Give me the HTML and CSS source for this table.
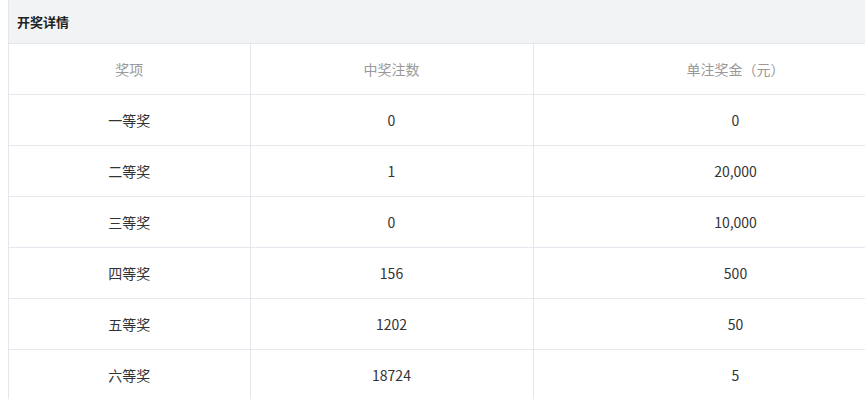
FILE: index.html
```html
<!DOCTYPE html>
<html lang="zh">
<head>
<meta charset="utf-8">
<link rel="stylesheet" href="styles.css">
</head>
<body>
<div class="panel">
  <div class="panel-title">开奖详情</div>
  <table class="detail">
    <colgroup>
      <col class="c1"><col class="c2"><col class="c3">
    </colgroup>
    <thead>
      <tr><th>奖项</th><th>中奖注数</th><th>单注奖金（元）</th></tr>
    </thead>
    <tbody>
      <tr><td>一等奖</td><td>0</td><td>0</td></tr>
      <tr><td>二等奖</td><td>1</td><td>20,000</td></tr>
      <tr><td>三等奖</td><td>0</td><td>10,000</td></tr>
      <tr><td>四等奖</td><td>156</td><td>500</td></tr>
      <tr><td>五等奖</td><td>1202</td><td>50</td></tr>
      <tr><td>六等奖</td><td>18724</td><td>5</td></tr>
    </tbody>
  </table>
</div>
</body>
</html>
```
FILE: styles.css
```css
html, body {
  margin: 0;
  background: #fff;
  overflow: hidden;
}
body {
  padding-left: 8px;
  font-family: "Microsoft YaHei", "Noto Sans CJK SC", "Noto Sans", sans-serif;
  font-size: 14px;
  color: #333;
}
.panel {
  width: 929px;
  border-left: 1px solid #e4e7ed;
}
.panel-title {
  height: 43px;
  line-height: 43px;
  padding-left: 8px;
  background: #f2f3f5;
  border-bottom: 1px solid #e4e7ed;
  font-weight: bold;
  font-size: 13px;
  color: #222;
}
.detail {
  width: 929px;
  border-collapse: collapse;
  table-layout: fixed;
}
.c1 { width: 241px; }
.c2 { width: 283px; }
.c3 { width: 405px; }
.detail th, .detail td {
  height: 50px;
  padding: 0;
  text-align: center;
  border-right: 1px solid #e4e7ed;
  border-bottom: 1px solid #e4e7ed;
  font-size: 14px;
}
.detail th {
  font-weight: normal;
  color: #999;
}
.detail td {
  color: #333;
}
```
